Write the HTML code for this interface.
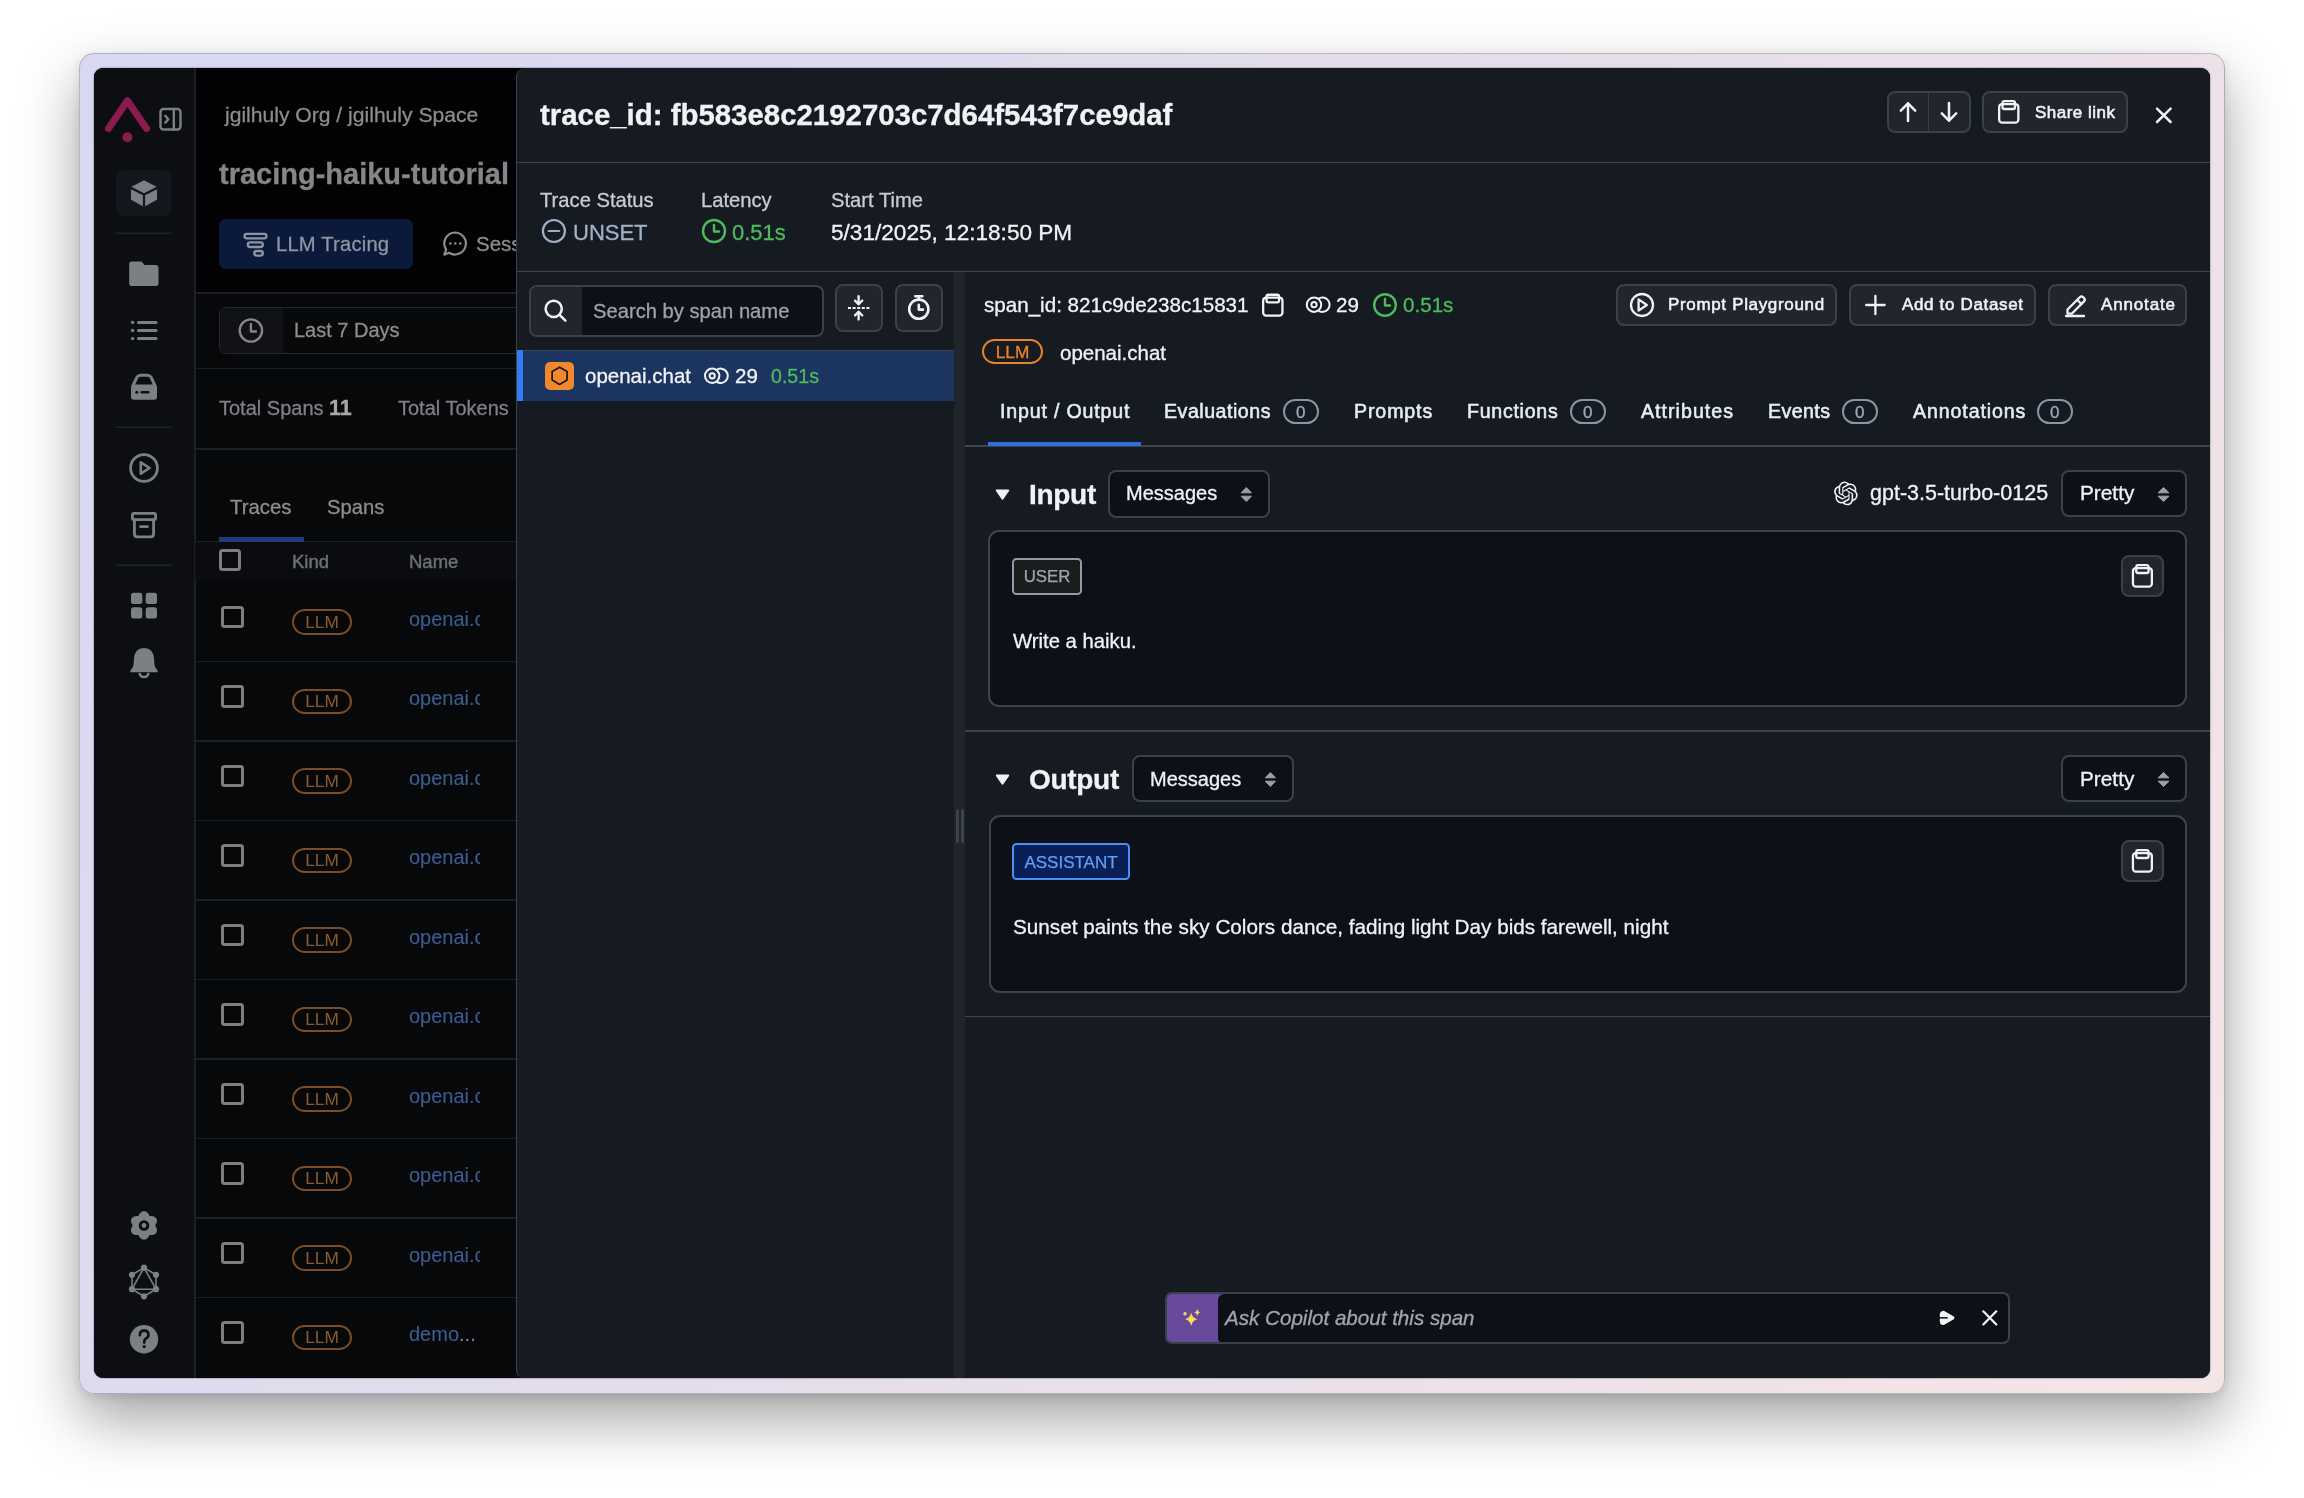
<!DOCTYPE html>
<html><head><meta charset="utf-8">
<style>
*{box-sizing:border-box;margin:0;padding:0}
html,body{width:2304px;height:1498px;overflow:hidden;background:#ffffff;font-family:"Liberation Sans",sans-serif}
.a{position:absolute}
.t{position:absolute;white-space:nowrap;line-height:40px;height:40px;will-change:transform;-webkit-text-stroke-width:0.3px}
#frame{left:78.5px;top:53px;width:2146.5px;height:1340.5px;border-radius:15px;border:1px solid rgba(0,0,0,.2);
 background:linear-gradient(120deg,#d8d8f3 0%,#e3ddec 45%,#f5e5e5 100%);
 box-shadow:0 26px 58px rgba(0,0,0,.36),0 3px 10px rgba(0,0,0,.10)}
#app{left:94px;top:68px;width:2116px;height:1310.3px;border-radius:9px;overflow:hidden;background:#050608;box-shadow:0 0 0 1px rgba(70,60,90,.16),0 0 3px rgba(70,60,90,.18)}
#clip{left:94px;top:68px;width:2116px;height:1310.3px;border-radius:9px;overflow:hidden}
#side{left:0;top:0;width:102px;height:1310px;background:#0d0e11;border-right:2px solid #1c1f23}
.btn{position:absolute;background:#21262d;border:2px solid #3b4149;border-radius:8px}
.sel{position:absolute;background:#0d1117;border:2px solid #3b4149;border-radius:8px}
.card{position:absolute;background:#0d1117;border:2px solid #3c434b;border-radius:11px}
.pill{position:absolute;top:399px;width:35.5px;height:24.6px;border:2px solid #8795a8;border-radius:12.3px;text-align:center;line-height:24px;font-size:17px;color:#9fabba;-webkit-text-stroke:0.3px #9fabba;will-change:transform}
svg.a{overflow:visible}
</style></head><body>
<div id="frame" class="a"></div>
<div id="app" class="a"><div class="a" style="left:101px;top:0;width:330px;height:224px;background:#020204"></div><div class="a" style="left:101px;top:224px;width:330px;height:1086px;background:#07080a"></div><div id="side" class="a"></div></div>
<div id="clip" class="a"><div class="a" style="left:-94px;top:-68px;width:2304px;height:1498px">
<!-- SIDEBAR -->
<svg class="a" style="left:0;top:0" width="2304" height="1498" viewBox="0 0 2304 1498">
 <g fill="none" stroke="#8b1a4f" stroke-width="7" stroke-linecap="round" stroke-linejoin="round">
  <path d="M108.5 128.5 L127.4 100.8 L146.5 128.5"/>
 </g>
 <circle cx="127.4" cy="137.2" r="5" fill="#8b1a4f"/>
 <g fill="none" stroke="#7c7f84" stroke-width="2.4" stroke-linecap="round" stroke-linejoin="round">
  <rect x="160.5" y="109" width="20" height="20.5" rx="3"/>
  <path d="M173.8 109 V129.5"/>
  <path d="M165.3 115.8 L168.3 119.2 L165.3 122.6"/>
 </g>
 <rect x="116" y="170" width="55.5" height="46" rx="8" fill="#14171d"/>
 <g fill="#7c7f84">
  <path d="M144 180.3 L156.6 186.8 L144 193.2 L131.4 186.8 Z"/>
  <path d="M131 189.2 L142.9 195.2 L142.9 206.2 L131 199.8 Z"/>
  <path d="M145.1 195.2 L157 189.2 L157 199.8 L145.1 206.2 Z"/>
 </g>
 <g fill="#1f2226">
  <rect x="116" y="232.5" width="55.5" height="1.6"/>
  <rect x="116" y="426.5" width="55.5" height="1.6"/>
  <rect x="116" y="564.5" width="55.5" height="1.6"/>
 </g>
 <!-- folder -->
 <path fill="#7c7f84" d="M129.2 264.2 Q129.2 261.5 132 261.5 H140.5 Q141.6 261.5 142.3 262.3 L144.6 265 H155.6 Q158.5 265 158.5 267.8 V283.2 Q158.5 286 155.6 286 H132 Q129.2 286 129.2 283.2 Z"/>
 <!-- list -->
 <g stroke="#7c7f84" stroke-width="3" stroke-linecap="round">
  <path d="M138.5 322.4 H156"/><path d="M138.5 330.5 H156"/><path d="M138.5 338.6 H156"/>
 </g>
 <g fill="#7c7f84"><circle cx="132.6" cy="322.4" r="1.7"/><circle cx="132.6" cy="330.5" r="1.7"/><circle cx="132.6" cy="338.6" r="1.7"/></g>
 <!-- drive -->
 <path fill="none" stroke="#7c7f84" stroke-width="3" stroke-linejoin="round" d="M132.8 386 L137 377.2 Q138.3 375.3 140.5 375.3 H147.5 Q149.7 375.3 151 377.2 L155.2 386"/>
 <path fill="#7c7f84" d="M131 387.5 Q131 384.5 134 384.5 H154 Q157 384.5 157 387.5 V396.8 Q157 399.8 154 399.8 H134 Q131 399.8 131 396.8 Z"/>
 <circle cx="136.8" cy="392.2" r="1.5" fill="#0d0e11"/>
 <rect x="140.5" y="391" width="9" height="2.5" rx="1.2" fill="#0d0e11"/>
 <!-- play circle -->
 <circle cx="144" cy="468" r="13.4" fill="none" stroke="#7c7f84" stroke-width="2.8"/>
 <path d="M140.8 462.3 L149.6 468 L140.8 473.7 Z" fill="none" stroke="#7c7f84" stroke-width="2.6" stroke-linejoin="round"/>
 <!-- archive -->
 <g fill="none" stroke="#7c7f84" stroke-width="2.8" stroke-linejoin="round" stroke-linecap="round">
  <rect x="132.4" y="513.4" width="23.2" height="6.2" rx="1.5"/>
  <path d="M134.4 519.6 V534 Q134.4 536.8 137.2 536.8 H150.8 Q153.6 536.8 153.6 534 V519.6"/>
  <path d="M140.5 526.6 H147.5"/>
 </g>
 <!-- grid -->
 <g fill="#7c7f84">
  <rect x="131" y="592.8" width="11.3" height="11.3" rx="2.5"/><rect x="145.7" y="592.8" width="11.3" height="11.3" rx="2.5"/>
  <rect x="131" y="607.3" width="11.3" height="11.3" rx="2.5"/><rect x="145.7" y="607.3" width="11.3" height="11.3" rx="2.5"/>
 </g>
 <!-- bell -->
 <path fill="#7c7f84" d="M144 648 Q153.3 648 154 658.5 L154.6 665.5 Q155 668 157.5 670.2 Q158.4 671.4 157.2 672.2 H130.8 Q129.6 671.4 130.5 670.2 Q133 668 133.4 665.5 L134 658.5 Q134.7 648 144 648 Z"/>
 <path fill="none" stroke="#7c7f84" stroke-width="2.4" d="M139.5 673 Q140 677 144 677 Q148 677 148.5 673"/>
 <!-- gear -->
 <g transform="translate(144 1225.5)">
  <path fill="#7c7f84" d="M0 -14.3 C3.2 -14.3 4.6 -11.6 5.6 -9.6 C7.9 -9.6 11 -9.8 12.4 -7 C13.9 -4.3 12.3 -1.9 11.2 0 C12.3 1.9 13.9 4.3 12.4 7 C11 9.8 7.9 9.6 5.6 9.6 C4.6 11.6 3.2 14.3 0 14.3 C-3.2 14.3 -4.6 11.6 -5.6 9.6 C-7.9 9.6 -11 9.8 -12.4 7 C-13.9 4.3 -12.3 1.9 -11.2 0 C-12.3 -1.9 -13.9 -4.3 -12.4 -7 C-11 -9.8 -7.9 -9.6 -5.6 -9.6 C-4.6 -11.6 -3.2 -14.3 0 -14.3 Z"/>
  <circle r="5.3" fill="#0d0e11"/><circle r="2.4" fill="#7c7f84"/>
 </g>
 <!-- graphql -->
 <g transform="translate(144 1282)" stroke="#7c7f84" stroke-width="1.6" fill="none">
  <path d="M0 -14.3 L12 -7.2 L12 7.2 L0 14.3 L-12 7.2 L-12 -7.2 Z"/>
  <path d="M0 -14.3 L12 7.2 L-12 7.2 Z"/>
  <g fill="#7c7f84" stroke="none">
   <circle cx="0" cy="-14.3" r="3.1"/><circle cx="12" cy="-7.2" r="3.1"/><circle cx="12" cy="7.2" r="3.1"/>
   <circle cx="0" cy="14.3" r="3.1"/><circle cx="-12" cy="7.2" r="3.1"/><circle cx="-12" cy="-7.2" r="3.1"/>
  </g>
 </g>
 <!-- help -->
 <circle cx="144" cy="1339.2" r="14.2" fill="#7c7f84"/>
 <path d="M139.8 1335.2 Q139.8 1330.6 144.2 1330.6 Q148.5 1330.6 148.5 1334.8 Q148.5 1337.4 145.8 1338.6 Q144.2 1339.5 144.2 1341.8 V1342.6" fill="none" stroke="#0d0e11" stroke-width="2.6" stroke-linecap="round"/>
 <circle cx="144.2" cy="1346.6" r="1.6" fill="#0d0e11"/>
</svg>
<!-- LEFT MAIN -->
<div class="t" style="left:225px;top:95.2px;font-size:21.1px;color:#8d8d8f">jgilhuly Org / jgilhuly Space</div>
<div class="t" style="left:219px;top:154px;font-size:29px;font-weight:bold;color:#858688;letter-spacing:0px">tracing-haiku-tutorial</div>
<div class="a" style="left:219px;top:218.5px;width:193.5px;height:50.5px;border-radius:7px;background:#0b1a3b"></div>
<div class="t" style="left:276px;top:224px;font-size:20.2px;color:#8e95a2;letter-spacing:0.2px">LLM Tracing</div>
<div class="t" style="left:476px;top:224px;font-size:20.5px;color:#8d8d8f">Sessions</div>
<div class="a" style="left:195px;top:292px;width:322px;height:1.5px;background:#1c1f24"></div>
<div class="a" style="left:219px;top:306.5px;width:320px;height:47.5px;border-radius:7px;border:1.5px solid #24272c;background:#08090b;overflow:hidden"><div class="a" style="left:0;top:0;width:63px;height:46px;background:#101215"></div></div>
<div class="t" style="left:294px;top:310px;font-size:20px;color:#8d8d8f">Last 7 Days</div>
<div class="a" style="left:195px;top:367.5px;width:322px;height:1.5px;background:#1c1f24"></div>
<div class="t" style="left:219px;top:388px;font-size:20px;color:#7f8083">Total Spans <b style="color:#a7a8aa;font-size:21.5px">11</b></div>
<div class="t" style="left:398px;top:388px;font-size:20px;color:#7f8083">Total Tokens</div>
<div class="a" style="left:195px;top:448px;width:322px;height:1.5px;background:#1c1f24"></div>
<div class="t" style="left:230px;top:487px;font-size:20.4px;color:#8d8d8f">Traces</div>
<div class="t" style="left:327px;top:487px;font-size:20.2px;color:#8d8d8f">Spans</div>
<div class="a" style="left:195px;top:541px;width:322px;height:40px;background:#0b0c0f;border-top:1.5px solid #1c1f24"></div>
<div class="a" style="left:218.5px;top:537px;width:85px;height:5px;background:#1b3b7a"></div>
<div class="t" style="left:292px;top:542px;font-size:18.5px;color:#6d7075;-webkit-text-stroke:0.45px #6d7075">Kind</div>
<div class="t" style="left:409px;top:542px;font-size:18.5px;color:#6d7075;-webkit-text-stroke:0.45px #6d7075">Name</div>
<div class="a" style="left:219px;top:549px;width:22px;height:22px;border:3px solid #7d7e80;border-radius:3.5px"></div>

<div class="a" style="left:221px;top:605.5px;width:22.5px;height:22.5px;border:3px solid #7d7e80;border-radius:3.5px"></div>
<div class="a" style="left:292px;top:609.0px;width:60px;height:25.5px;border:2.2px solid #7c4d24;border-radius:13px"></div>
<div class="t" style="left:292px;top:601.8px;width:60px;text-align:center;font-size:17.3px;color:#8a5a2e;-webkit-text-stroke-width:0.05px">LLM</div>
<div class="t" style="left:409px;top:598.5px;font-size:20px;color:#3b5d91;width:71px;overflow:hidden;-webkit-text-stroke-width:0.1px">openai.chat</div>
<div class="a" style="left:195px;top:660.5px;width:322px;height:1.5px;background:#1c1f24"></div>
<div class="a" style="left:221px;top:685.0px;width:22.5px;height:22.5px;border:3px solid #7d7e80;border-radius:3.5px"></div>
<div class="a" style="left:292px;top:688.5px;width:60px;height:25.5px;border:2.2px solid #7c4d24;border-radius:13px"></div>
<div class="t" style="left:292px;top:681.3px;width:60px;text-align:center;font-size:17.3px;color:#8a5a2e;-webkit-text-stroke-width:0.05px">LLM</div>
<div class="t" style="left:409px;top:678.0px;font-size:20px;color:#3b5d91;width:71px;overflow:hidden;-webkit-text-stroke-width:0.1px">openai.chat</div>
<div class="a" style="left:195px;top:740.0px;width:322px;height:1.5px;background:#1c1f24"></div>
<div class="a" style="left:221px;top:764.5px;width:22.5px;height:22.5px;border:3px solid #7d7e80;border-radius:3.5px"></div>
<div class="a" style="left:292px;top:768.0px;width:60px;height:25.5px;border:2.2px solid #7c4d24;border-radius:13px"></div>
<div class="t" style="left:292px;top:760.8px;width:60px;text-align:center;font-size:17.3px;color:#8a5a2e;-webkit-text-stroke-width:0.05px">LLM</div>
<div class="t" style="left:409px;top:757.5px;font-size:20px;color:#3b5d91;width:71px;overflow:hidden;-webkit-text-stroke-width:0.1px">openai.chat</div>
<div class="a" style="left:195px;top:819.5px;width:322px;height:1.5px;background:#1c1f24"></div>
<div class="a" style="left:221px;top:844.0px;width:22.5px;height:22.5px;border:3px solid #7d7e80;border-radius:3.5px"></div>
<div class="a" style="left:292px;top:847.5px;width:60px;height:25.5px;border:2.2px solid #7c4d24;border-radius:13px"></div>
<div class="t" style="left:292px;top:840.3px;width:60px;text-align:center;font-size:17.3px;color:#8a5a2e;-webkit-text-stroke-width:0.05px">LLM</div>
<div class="t" style="left:409px;top:837.0px;font-size:20px;color:#3b5d91;width:71px;overflow:hidden;-webkit-text-stroke-width:0.1px">openai.chat</div>
<div class="a" style="left:195px;top:899.0px;width:322px;height:1.5px;background:#1c1f24"></div>
<div class="a" style="left:221px;top:923.5px;width:22.5px;height:22.5px;border:3px solid #7d7e80;border-radius:3.5px"></div>
<div class="a" style="left:292px;top:927.0px;width:60px;height:25.5px;border:2.2px solid #7c4d24;border-radius:13px"></div>
<div class="t" style="left:292px;top:919.8px;width:60px;text-align:center;font-size:17.3px;color:#8a5a2e;-webkit-text-stroke-width:0.05px">LLM</div>
<div class="t" style="left:409px;top:916.5px;font-size:20px;color:#3b5d91;width:71px;overflow:hidden;-webkit-text-stroke-width:0.1px">openai.chat</div>
<div class="a" style="left:195px;top:978.5px;width:322px;height:1.5px;background:#1c1f24"></div>
<div class="a" style="left:221px;top:1003.0px;width:22.5px;height:22.5px;border:3px solid #7d7e80;border-radius:3.5px"></div>
<div class="a" style="left:292px;top:1006.5px;width:60px;height:25.5px;border:2.2px solid #7c4d24;border-radius:13px"></div>
<div class="t" style="left:292px;top:999.3px;width:60px;text-align:center;font-size:17.3px;color:#8a5a2e;-webkit-text-stroke-width:0.05px">LLM</div>
<div class="t" style="left:409px;top:996.0px;font-size:20px;color:#3b5d91;width:71px;overflow:hidden;-webkit-text-stroke-width:0.1px">openai.chat</div>
<div class="a" style="left:195px;top:1058.0px;width:322px;height:1.5px;background:#1c1f24"></div>
<div class="a" style="left:221px;top:1082.5px;width:22.5px;height:22.5px;border:3px solid #7d7e80;border-radius:3.5px"></div>
<div class="a" style="left:292px;top:1086.0px;width:60px;height:25.5px;border:2.2px solid #7c4d24;border-radius:13px"></div>
<div class="t" style="left:292px;top:1078.8px;width:60px;text-align:center;font-size:17.3px;color:#8a5a2e;-webkit-text-stroke-width:0.05px">LLM</div>
<div class="t" style="left:409px;top:1075.5px;font-size:20px;color:#3b5d91;width:71px;overflow:hidden;-webkit-text-stroke-width:0.1px">openai.chat</div>
<div class="a" style="left:195px;top:1137.5px;width:322px;height:1.5px;background:#1c1f24"></div>
<div class="a" style="left:221px;top:1162.0px;width:22.5px;height:22.5px;border:3px solid #7d7e80;border-radius:3.5px"></div>
<div class="a" style="left:292px;top:1165.5px;width:60px;height:25.5px;border:2.2px solid #7c4d24;border-radius:13px"></div>
<div class="t" style="left:292px;top:1158.3px;width:60px;text-align:center;font-size:17.3px;color:#8a5a2e;-webkit-text-stroke-width:0.05px">LLM</div>
<div class="t" style="left:409px;top:1155.0px;font-size:20px;color:#3b5d91;width:71px;overflow:hidden;-webkit-text-stroke-width:0.1px">openai.chat</div>
<div class="a" style="left:195px;top:1217.0px;width:322px;height:1.5px;background:#1c1f24"></div>
<div class="a" style="left:221px;top:1241.5px;width:22.5px;height:22.5px;border:3px solid #7d7e80;border-radius:3.5px"></div>
<div class="a" style="left:292px;top:1245.0px;width:60px;height:25.5px;border:2.2px solid #7c4d24;border-radius:13px"></div>
<div class="t" style="left:292px;top:1237.8px;width:60px;text-align:center;font-size:17.3px;color:#8a5a2e;-webkit-text-stroke-width:0.05px">LLM</div>
<div class="t" style="left:409px;top:1234.5px;font-size:20px;color:#3b5d91;width:71px;overflow:hidden;-webkit-text-stroke-width:0.1px">openai.chat</div>
<div class="a" style="left:195px;top:1296.5px;width:322px;height:1.5px;background:#1c1f24"></div>
<div class="a" style="left:221px;top:1321.0px;width:22.5px;height:22.5px;border:3px solid #7d7e80;border-radius:3.5px"></div>
<div class="a" style="left:292px;top:1324.5px;width:60px;height:25.5px;border:2.2px solid #7c4d24;border-radius:13px"></div>
<div class="t" style="left:292px;top:1317.3px;width:60px;text-align:center;font-size:17.3px;color:#8a5a2e;-webkit-text-stroke-width:0.05px">LLM</div>
<div class="t" style="left:409px;top:1314.0px;font-size:20px;color:#3b5d91;-webkit-text-stroke-width:0.1px">demo<span style="color:#85888c">...</span></div>
<svg class="a" style="left:0;top:0" width="2304" height="1498" viewBox="0 0 2304 1498">
 <g fill="none" stroke="#8e95a2" stroke-width="2.3" stroke-linecap="round">
  <rect x="244.5" y="233.8" width="22" height="4.6" rx="2.3"/>
  <rect x="247.8" y="242.4" width="15" height="4.6" rx="2.3"/>
  <rect x="254.3" y="251" width="8.5" height="4.6" rx="2.3"/>
 </g>
 <g fill="none" stroke="#8d8d8f" stroke-width="2.2" stroke-linejoin="round">
  <path d="M455.3 232.5 A11 11 0 1 1 449 252.8 L444.3 254.6 L446.2 249.6 A11 11 0 0 1 455.3 232.5 Z"/>
 </g>
 <g fill="#8d8d8f"><circle cx="450.3" cy="243.5" r="1.3"/><circle cx="455.3" cy="243.5" r="1.3"/><circle cx="460.3" cy="243.5" r="1.3"/></g>
 <circle cx="250.9" cy="330.5" r="11.2" fill="none" stroke="#85878a" stroke-width="2.3"/>
 <path d="M250.9 324 V331.5 H256" fill="none" stroke="#85878a" stroke-width="2.3" stroke-linecap="round" stroke-linejoin="round"/>
</svg>
<!-- PANEL -->
<div class="a" style="left:515.8px;top:68px;width:1694.2px;height:1310px;background:#161b22;border-radius:9px 9px 0 8px;border-left:1.6px solid #3b4149"></div>
<div class="t" style="left:540px;top:95px;font-size:29.4px;font-weight:bold;color:#f0f3f6">trace_id: fb583e8c2192703c7d64f543f7ce9daf</div>
<div class="btn" style="left:1887px;top:91px;width:84px;height:42px"></div>
<div class="a" style="left:1927.8px;top:92px;width:1.5px;height:40px;background:#3a4049"></div>
<div class="btn" style="left:1982px;top:91px;width:145.5px;height:42px"></div>
<div class="t" style="left:2035px;top:93.3px;font-size:17.0px;letter-spacing:0.49px;color:#f0f3f6;-webkit-text-stroke:0.55px #f0f3f6">Share link</div>
<div class="a" style="left:517px;top:161.5px;width:1693px;height:1.6px;background:#3e444d"></div>
<div class="t" style="left:540px;top:180.3px;font-size:20.2px;color:#c9cdd2">Trace Status</div>
<div class="t" style="left:700.8px;top:180.3px;font-size:20.2px;color:#c9cdd2">Latency</div>
<div class="t" style="left:830.5px;top:180.3px;font-size:20.2px;color:#c9cdd2">Start Time</div>
<div class="t" style="left:573px;top:212.6px;font-size:22px;color:#a0b0c6">UNSET</div>
<div class="t" style="left:731.8px;top:212.6px;font-size:22px;color:#4cbb5e">0.51s</div>
<div class="t" style="left:830.5px;top:212.6px;font-size:22.6px;color:#f0f3f6">5/31/2025, 12:18:50 PM</div>
<div class="a" style="left:517px;top:270.8px;width:1693px;height:1.6px;background:#3e444d"></div>
<!-- span tree -->
<div class="a" style="left:529px;top:284.5px;width:294.5px;height:52.5px;border:2px solid #3b4149;border-radius:8px;background:#0d1117;overflow:hidden"><div class="a" style="left:0;top:0;width:51px;height:50px;background:#21262d"></div></div>
<div class="t" style="left:592.5px;top:291px;font-size:20.2px;color:#9ca3ab">Search by span name</div>
<div class="btn" style="left:835px;top:284.4px;width:48px;height:47.2px"></div>
<div class="btn" style="left:894.7px;top:284.4px;width:48px;height:47.2px"></div>
<div class="a" style="left:517px;top:349.5px;width:437px;height:51.2px;background:#1b3460;border-top:1.5px solid #36425a"></div>
<div class="a" style="left:517px;top:350px;width:6px;height:50.7px;background:#2f7cf6"></div>
<div class="a" style="left:545.3px;top:361.8px;width:28.6px;height:28px;border-radius:5px;background:#f0892e"></div>
<div class="t" style="left:585.3px;top:355.5px;font-size:20.5px;color:#f0f3f6">openai.chat</div>
<div class="t" style="left:735px;top:355.5px;font-size:20.5px;color:#f0f3f6">29</div>
<div class="t" style="left:770.5px;top:355.5px;font-size:19.6px;color:#4cbb5e">0.51s</div>
<div class="a" style="left:954px;top:272px;width:11px;height:1106px;background:#20252c"></div>
<div class="a" style="left:956px;top:808.7px;width:3px;height:34px;border-radius:2px;background:#3d434b"></div>
<div class="a" style="left:961px;top:808.7px;width:3px;height:34px;border-radius:2px;background:#3d434b"></div>
<!-- span detail header -->
<div class="t" style="left:983.6px;top:284.7px;font-size:20.6px;color:#f0f3f6">span_id: 821c9de238c15831</div>
<div class="t" style="left:1336px;top:284.7px;font-size:20.6px;color:#f0f3f6">29</div>
<div class="t" style="left:1403px;top:284.7px;font-size:20.6px;color:#4cbb5e">0.51s</div>
<div class="btn" style="left:1615.6px;top:284.3px;width:221.2px;height:41.4px"></div>
<div class="t" style="left:1667.8px;top:285.2px;font-size:17.0px;letter-spacing:0.66px;color:#f0f3f6;-webkit-text-stroke:0.55px #f0f3f6">Prompt Playground</div>
<div class="btn" style="left:1849px;top:284.3px;width:187px;height:41.4px"></div>
<div class="t" style="left:1902px;top:285.2px;font-size:17.0px;letter-spacing:0.66px;color:#f0f3f6;-webkit-text-stroke:0.55px #f0f3f6">Add to Dataset</div>
<div class="btn" style="left:2048px;top:284.3px;width:139px;height:41.4px"></div>
<div class="t" style="left:2100.5px;top:285.2px;font-size:17.0px;letter-spacing:0.85px;color:#f0f3f6;-webkit-text-stroke:0.55px #f0f3f6">Annotate</div>
<div class="a" style="left:982px;top:339.4px;width:61px;height:25px;border:2.2px solid #e8832a;border-radius:13px"></div>
<div class="t" style="left:982px;top:332px;width:61px;text-align:center;font-size:17.3px;color:#e8832a;-webkit-text-stroke:0.3px #e8832a">LLM</div>
<div class="t" style="left:1060px;top:332.5px;font-size:20.5px;color:#f0f3f6">openai.chat</div>
<!-- tabs -->
<div class="t" style="left:1000px;top:391.3px;font-size:19.6px;letter-spacing:0.83px;color:#e6edf3;-webkit-text-stroke:0.55px #e6edf3">Input / Output</div>
<div class="t" style="left:1164px;top:391.3px;font-size:19.6px;letter-spacing:0.52px;color:#e6edf3;-webkit-text-stroke:0.55px #e6edf3">Evaluations</div>
<div class="t" style="left:1353.5px;top:391.3px;font-size:19.6px;letter-spacing:0.88px;color:#e6edf3;-webkit-text-stroke:0.55px #e6edf3">Prompts</div>
<div class="t" style="left:1466.7px;top:391.3px;font-size:19.6px;letter-spacing:0.72px;color:#e6edf3;-webkit-text-stroke:0.55px #e6edf3">Functions</div>
<div class="t" style="left:1640.7px;top:391.3px;font-size:19.6px;letter-spacing:1.03px;color:#e6edf3;-webkit-text-stroke:0.55px #e6edf3">Attributes</div>
<div class="t" style="left:1768px;top:391.3px;font-size:19.6px;letter-spacing:0.42px;color:#e6edf3;-webkit-text-stroke:0.55px #e6edf3">Events</div>
<div class="t" style="left:1912.7px;top:391.3px;font-size:19.6px;letter-spacing:0.89px;color:#e6edf3;-webkit-text-stroke:0.55px #e6edf3">Annotations</div>
<div class="pill" style="left:1282.8px">0</div>
<div class="pill" style="left:1570px">0</div>
<div class="pill" style="left:1841.6px">0</div>
<div class="pill" style="left:2036.5px">0</div>
<div class="a" style="left:965px;top:445px;width:1245px;height:1.6px;background:#3e444d"></div>
<div class="a" style="left:987.8px;top:442px;width:153.6px;height:4.4px;background:#2f6fe0"></div>
<!-- input section -->
<div class="t" style="left:1028.8px;top:474.8px;font-size:28px;font-weight:bold;color:#f0f3f6;letter-spacing:-0.3px">Input</div>
<div class="sel" style="left:1107.5px;top:469.5px;width:162.5px;height:48.2px"></div>
<div class="t" style="left:1125.8px;top:473px;font-size:20px;color:#f0f3f6">Messages</div>
<div class="t" style="left:1869.7px;top:473px;font-size:21.5px;color:#f0f3f6">gpt-3.5-turbo-0125</div>
<div class="sel" style="left:2061.4px;top:470px;width:125.6px;height:47px"></div>
<div class="t" style="left:2080px;top:473px;font-size:20.8px;color:#f0f3f6">Pretty</div>
<div class="card" style="left:988px;top:529.6px;width:1199px;height:177.8px"></div>
<div class="a" style="left:1012.2px;top:558.3px;width:70px;height:36.7px;background:#1b1c1e;border:2px solid #959ba3;border-radius:4.5px"></div>
<div class="t" style="left:1012.2px;top:556.6px;width:70px;text-align:center;font-size:16.8px;color:#a0a6ae;-webkit-text-stroke:0.25px #a0a6ae">USER</div>
<div class="btn" style="left:2121px;top:555px;width:42.5px;height:41.8px"></div>
<div class="t" style="left:1013px;top:621.3px;font-size:20.3px;color:#f0f3f6">Write a haiku.</div>
<div class="a" style="left:965px;top:730px;width:1245px;height:1.6px;background:#3e444d"></div>
<!-- output section -->
<div class="t" style="left:1028.8px;top:760px;font-size:28px;font-weight:bold;color:#f0f3f6;letter-spacing:-0.3px">Output</div>
<div class="sel" style="left:1131.5px;top:755px;width:162px;height:47.3px"></div>
<div class="t" style="left:1150px;top:758.7px;font-size:20px;color:#f0f3f6">Messages</div>
<div class="sel" style="left:2061.4px;top:755px;width:125.6px;height:47px"></div>
<div class="t" style="left:2080px;top:758.7px;font-size:20.8px;color:#f0f3f6">Pretty</div>
<div class="card" style="left:989px;top:814.7px;width:1198px;height:178px"></div>
<div class="a" style="left:1012.2px;top:843.4px;width:118px;height:36.5px;background:#0a1f55;border:2px solid #4b8ff5;border-radius:4.5px"></div>
<div class="t" style="left:1012.2px;top:843.4px;width:118px;text-align:center;font-size:17px;color:#5ea0fa;-webkit-text-stroke:0.25px #5ea0fa">ASSISTANT</div>
<div class="btn" style="left:2121px;top:840px;width:42.5px;height:41.8px"></div>
<div class="t" style="left:1012.8px;top:906.7px;font-size:20.7px;color:#f0f3f6">Sunset paints the sky Colors dance, fading light Day bids farewell, night</div>
<div class="a" style="left:965px;top:1015.5px;width:1245px;height:1.6px;background:#3e444d"></div>
<!-- copilot -->
<div class="a" style="left:1165.3px;top:1291.5px;width:845px;height:52.5px;border:2px solid #3b4149;border-radius:7px;background:#674a9c;overflow:hidden"><div class="a" style="left:51px;top:0;width:800px;height:50px;background:#0d1117;border-radius:6px 0 0 6px"></div></div>
<div class="t" style="left:1224.5px;top:1298px;font-size:20.6px;font-style:italic;color:#a0a6ae">Ask Copilot about this span</div>
<svg class="a" style="left:0;top:0" width="2304" height="1498" viewBox="0 0 2304 1498">
<g fill="none" stroke="#f0f3f6" stroke-width="2.5" stroke-linecap="round" stroke-linejoin="round">
 <path d="M1908 103.5 V121"/><path d="M1900.8 110.6 L1908 103.3 L1915.2 110.6"/>
 <path d="M1949 103 V120.5"/><path d="M1941.8 113.4 L1949 120.7 L1956.2 113.4"/>
 <path d="M2157 108.6 L2170.6 122 M2170.6 108.6 L2157 122"/>
</g>
<g fill="none" stroke="#f0f3f6" stroke-width="2.3" stroke-linejoin="round">
  <rect x="1999.15" y="104.04599999999999" width="19.2" height="18.604" rx="3"/>
  <rect x="2002.515" y="101.15" width="12.469999999999999" height="7.853999999999999" rx="1.8"/>
 </g>
<g fill="none" stroke="#a0b0c6" stroke-width="2.2" stroke-linecap="round"><circle cx="553.9" cy="231" r="11"/><path d="M548.6 231 H559.2"/></g>
<g fill="none" stroke="#4cbb5e" stroke-width="2.4" stroke-linecap="round" stroke-linejoin="round">
  <circle cx="714" cy="231" r="11"/><path d="M714 225 V231.5 H719"/></g>
<g fill="none" stroke="#f0f3f6" stroke-width="2.5" stroke-linecap="round"><circle cx="553.7" cy="308.8" r="8.1"/><path d="M559.6 314.8 L565.4 320.6"/></g>
<g fill="none" stroke="#f0f3f6" stroke-width="2.3" stroke-linecap="round" stroke-linejoin="round">
 <path d="M858.6 296.2 V304"/><path d="M855 300.6 L858.6 304.2 L862.2 300.6"/>
 <path d="M858.6 319.6 V312"/><path d="M855 315.4 L858.6 311.8 L862.2 315.4"/>
</g>
<path d="M848 308 H870" stroke="#f0f3f6" stroke-width="2.2" stroke-dasharray="3 1.6"/>
<g fill="none" stroke="#f0f3f6" stroke-width="2.6" stroke-linecap="round" stroke-linejoin="round">
 <circle cx="918.8" cy="309.2" r="9.6"/><path d="M915.3 296.3 H922.3 M918.8 296.5 V299.4"/><path d="M918.8 304.8 V309.6 H923"/>
</g>
<polygon points="559.60,367.20 567.05,371.50 567.05,380.10 559.60,384.40 552.15,380.10 552.15,371.50" fill="none" stroke="#22160b" stroke-width="1.7" stroke-linejoin="round"/>
<g fill="none" stroke="#f0f3f6" stroke-width="2">
  <circle cx="712.2" cy="375.8" r="7.2"/>
  <path d="M716.40 369.95 A7.2 7.2 0 1 1 716.40 381.65"/>
  <circle cx="712.2" cy="375.8" r="2.6"/>
 </g>
<g fill="none" stroke="#f0f3f6" stroke-width="2.3" stroke-linejoin="round">
  <rect x="1263.15" y="297.52700000000004" width="19.29999999999991" height="18.02299999999997" rx="3"/>
  <rect x="1266.536" y="294.75" width="12.527999999999947" height="7.622999999999989" rx="1.8"/>
 </g>
<g fill="none" stroke="#f0f3f6" stroke-width="2">
  <circle cx="1314.0" cy="304.7" r="7.2"/>
  <path d="M1318.20 298.85 A7.2 7.2 0 1 1 1318.20 310.55"/>
  <circle cx="1314.0" cy="304.7" r="2.6"/>
 </g>
<g fill="none" stroke="#4cbb5e" stroke-width="2.4" stroke-linecap="round" stroke-linejoin="round">
  <circle cx="1385" cy="305" r="10.8"/><path d="M1385 299 V305.5 H1390"/></g>
<g fill="none" stroke="#f0f3f6" stroke-width="2.3" stroke-linecap="round" stroke-linejoin="round">
 <circle cx="1642" cy="305" r="11"/><path d="M1638.6 299.4 L1646.8 305 L1638.6 310.6 Z"/>
 <path d="M1866.2 305 H1884.6 M1875.4 295.8 V314.2"/>
 <path d="M2067.5 309.5 L2079.8 297.2 Q2081.5 295.5 2083.2 297.2 L2084 298 Q2085.7 299.7 2084 301.4 L2071.7 313.7 H2067.5 Z"/>
 <path d="M2077.2 299.8 L2081.4 304"/>
 <path d="M2066 316 H2084"/>
</g>
<path fill="#f0f3f6" stroke="#f0f3f6" stroke-width="2" stroke-linejoin="round" d="M996.8 490.4 H1008.2 L1002.5 498.6 Z"/>
<path fill="#f0f3f6" stroke="#f0f3f6" stroke-width="2" stroke-linejoin="round" d="M996.8 775.4 H1008.2 L1002.5 783.6 Z"/>
<path fill="#9aa0a8" stroke="#9aa0a8" stroke-width="1" stroke-linejoin="round" d="M1241.1 492.8 L1246.3 487.5 L1251.5 492.8 Z M1241.1 496.2 L1246.3 501.5 L1251.5 496.2 Z"/>
<path fill="#9aa0a8" stroke="#9aa0a8" stroke-width="1" stroke-linejoin="round" d="M2158.0 492.8 L2163.5 487.5 L2169.0 492.8 Z M2158.0 496.2 L2163.5 501.5 L2169.0 496.2 Z"/>
<path fill="#9aa0a8" stroke="#9aa0a8" stroke-width="1" stroke-linejoin="round" d="M1265.3 777.8 L1270.4 772.5 L1275.5 777.8 Z M1265.3 781.2 L1270.4 786.5 L1275.5 781.2 Z"/>
<path fill="#9aa0a8" stroke="#9aa0a8" stroke-width="1" stroke-linejoin="round" d="M2158.0 777.8 L2163.5 772.5 L2169.0 777.8 Z M2158.0 781.2 L2163.5 786.5 L2169.0 781.2 Z"/>
<path fill="#f0f3f6" transform="translate(1834 481.6) scale(0.99)" d="M22.2819 9.8211a5.9847 5.9847 0 0 0-.5157-4.9108 6.0462 6.0462 0 0 0-6.5098-2.9A6.0651 6.0651 0 0 0 4.9807 4.1818a5.9847 5.9847 0 0 0-3.9977 2.9 6.0462 6.0462 0 0 0 .7427 7.0966 5.98 5.98 0 0 0 .511 4.9107 6.051 6.051 0 0 0 6.5146 2.9001A5.9847 5.9847 0 0 0 13.2599 24a6.0557 6.0557 0 0 0 5.7718-4.2058 5.9894 5.9894 0 0 0 3.9977-2.9001 6.0557 6.0557 0 0 0-.7475-7.0729zm-9.022 12.6081a4.4755 4.4755 0 0 1-2.8764-1.0408l.1419-.0804 4.7783-2.7582a.7948.7948 0 0 0 .3927-.6813v-6.7369l2.02 1.1686a.071.071 0 0 1 .038.052v5.5826a4.504 4.504 0 0 1-4.4945 4.4944zm-9.6607-4.1254a4.4708 4.4708 0 0 1-.5346-3.0137l.142.0852 4.783 2.7582a.7712.7712 0 0 0 .7806 0l5.8428-3.3685v2.3324a.0804.0804 0 0 1-.0332.0615L9.74 19.9502a4.4992 4.4992 0 0 1-6.1408-1.6464zM2.3408 7.8956a4.485 4.485 0 0 1 2.3655-1.9728V11.6a.7664.7664 0 0 0 .3879.6765l5.8144 3.3543-2.0201 1.1685a.0757.0757 0 0 1-.071 0l-4.8303-2.7865A4.504 4.504 0 0 1 2.3408 7.872zm16.5963 3.8558L13.1038 8.364 15.1192 7.2a.0757.0757 0 0 1 .071 0l4.8303 2.7913a4.4944 4.4944 0 0 1-.6765 8.1042v-5.6772a.79.79 0 0 0-.407-.667zm2.0107-3.0231l-.142-.0852-4.7735-2.7818a.7759.7759 0 0 0-.7854 0L9.409 9.2297V6.8974a.0662.0662 0 0 1 .0284-.0615l4.8303-2.7866a4.4992 4.4992 0 0 1 6.6802 4.66zM8.3065 12.863l-2.02-1.1638a.0804.0804 0 0 1-.038-.0567V6.0742a4.4992 4.4992 0 0 1 7.3757-3.4537l-.142.0805L8.704 5.459a.7948.7948 0 0 0-.3927.6813zm1.0976-2.3654l2.602-1.4998 2.6069 1.4998v2.9994l-2.5974 1.4997-2.6067-1.4997Z"/>
<g fill="none" stroke="#f0f3f6" stroke-width="2.3" stroke-linejoin="round">
  <rect x="2132.9500000000003" y="568.046" width="18.899999999999817" height="18.603999999999964" rx="3"/>
  <rect x="2136.252" y="565.15" width="12.295999999999893" height="7.853999999999985" rx="1.8"/>
 </g>
<g fill="none" stroke="#f0f3f6" stroke-width="2.3" stroke-linejoin="round">
  <rect x="2132.9500000000003" y="853.046" width="18.899999999999817" height="18.603999999999964" rx="3"/>
  <rect x="2136.252" y="850.15" width="12.295999999999893" height="7.853999999999985" rx="1.8"/>
 </g>
<g fill="#f5dc5a">
 <path d="M1191.2 1312.6 Q1192.2 1318.2 1197.4 1319.3 Q1192.2 1320.4 1191.2 1326 Q1190.2 1320.4 1185 1319.3 Q1190.2 1318.2 1191.2 1312.6 Z"/>
 <path d="M1197.3 1308.4 Q1197.8 1311.7 1200.6 1312.3 Q1197.8 1312.9 1197.3 1316.2 Q1196.8 1312.9 1194 1312.3 Q1196.8 1311.7 1197.3 1308.4 Z"/>
 <circle cx="1185" cy="1313.8" r="1.7"/>
</g>
<path fill="#f0f3f6" d="M1942.3 1310.9 Q1943.3 1310.6 1944.3 1311.1 L1953.8 1316.6 Q1955.2 1317.9 1953.8 1319.2 L1944.3 1324.7 Q1943.3 1325.2 1942.3 1324.9 Q1939.8 1324.2 1939.8 1321.5 V1314.3 Q1939.8 1311.6 1942.3 1310.9 Z"/>
<rect x="1939" y="1317.1" width="8.7" height="1.5" fill="#0d1117"/>
<g stroke="#f0f3f6" stroke-width="2.2" stroke-linecap="round"><path d="M1983.3 1311.3 L1996.3 1324.4 M1996.3 1311.3 L1983.3 1324.4"/></g>
</svg>
</div></div>
</body></html>
